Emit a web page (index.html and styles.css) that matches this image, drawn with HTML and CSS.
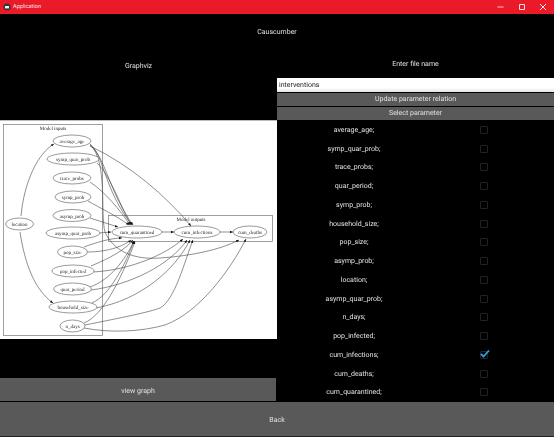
FILE: index.html
```html
<!DOCTYPE html>
<html lang="en">
<head>
    <meta charset="UTF-8">
    <meta name="viewport" content="width=device-width, initial-scale=1.0">
    <title>Application</title>
    <link rel="stylesheet" href="styles.css">
</head>
<body>
<div class="app">
    <div class="titlebar">
        <svg class="app-icon" width="8" height="8" viewBox="0 0 8 8"><circle cx="4" cy="4" r="3.6" fill="#3a3338"/><path d="M2 3h4v2.4H2z" fill="#f2f2f2"/></svg>
        <span class="app-name">Application</span>
        <div class="window-controls">
            <svg width="8" height="8" viewBox="0 0 8 8"><path d="M0.5 4h6" stroke="#f6c9cc" fill="none"/></svg>
            <svg width="8" height="8" viewBox="0 0 8 8"><path d="M1.5 1.5h5v5h-5z" stroke="#f9dfe0" fill="none"/></svg>
            <svg width="8" height="8" viewBox="0 0 8 8"><path d="M1 1l6 6M7 1l-6 6" stroke="#fbe6e7" fill="none"/></svg>
        </div>
    </div>

    <div class="page-title">Causcumber</div>

    <div class="columns">
        <div class="left-col">
            <div class="graph-label">Graphviz</div>
            <div class="graph-image">
                <svg width="277" height="219" viewBox="0 120 277 219">
                    <defs>
                        <marker id="head" markerWidth="4" markerHeight="4" refX="3" refY="1.5" orient="auto" markerUnits="userSpaceOnUse">
                            <path d="M0 0.3L3 1.5L0 2.7z" fill="#111"/>
                        </marker>
                    </defs>
                    <rect class="cluster" x="3.5" y="124.5" width="99" height="211"/>
                    <rect class="cluster" x="108.5" y="215.5" width="164" height="26"/>
                    <text class="node-text" x="53" y="130">Model inputs</text>
                    <text class="node-text" x="191" y="221">Model outputs</text>

                    <g class="edges">
                        <path d="M21 216C24 182 38 153 54 144"/>
                        <path d="M20 232C25 265 35 290 53 303"/>
                        <path d="M90 146C130 165 165 195 191 226"/>
                        <path d="M90 144C104 155 104 190 132 225"/>
                        <path d="M90 145C106 158 108 190 133 225"/>
                        <path d="M90 145C108 160 100 215 105 232C114 252 135 260 160 258C190 256 220 250 239 240"/>
                        <path d="M97 163C110 175 120 205 131 225"/>
                        <path d="M90 182C105 192 120 210 130 225"/>
                        <path d="M88 201C100 208 115 215 129 225"/>
                        <path d="M90 218L118 227"/>
                        <path d="M99 233L111 232"/>
                        <path d="M84 247C95 243 110 238 122 238"/>
                        <path d="M87 252C110 252 125 245 131 240"/>
                        <path d="M91 266C110 258 125 250 133 240"/>
                        <path d="M93 272C130 270 165 255 183 239"/>
                        <path d="M90 287C110 280 125 260 134 241"/>
                        <path d="M91 290C130 285 170 265 187 240"/>
                        <path d="M92 303C110 295 125 265 134 241"/>
                        <path d="M96 308C140 300 175 270 190 240"/>
                        <path d="M84 323C105 315 125 270 135 241"/>
                        <path d="M85 325C120 318 150 312 160 308C175 300 185 260 193 240"/>
                        <path d="M84 328C110 333 140 332 165 325C200 312 230 270 246 239"/>
                        <path d="M162 232L174 232"/>
                        <path d="M220 232L233 232"/>
                    </g>

                    <ellipse class="node" cx="72" cy="141" rx="19" ry="6"/>
                    <text class="node-text" x="72" y="143">average_age</text>
                    <ellipse class="node" cx="73" cy="159" rx="26" ry="6"/>
                    <text class="node-text" x="73" y="161">symp_quar_prob</text>
                    <ellipse class="node" cx="72" cy="178" rx="19" ry="6"/>
                    <text class="node-text" x="72" y="180">trace_probs</text>
                    <ellipse class="node" cx="73" cy="197" rx="18" ry="6"/>
                    <text class="node-text" x="73" y="199">symp_prob</text>
                    <ellipse class="node" cx="72" cy="215.500" rx="19" ry="6"/>
                    <text class="node-text" x="72" y="217.500">asymp_prob</text>
                    <ellipse class="node" cx="19.500" cy="224" rx="14" ry="6"/>
                    <text class="node-text" x="19.500" y="226">location</text>
                    <ellipse class="node" cx="73" cy="233" rx="27" ry="6"/>
                    <text class="node-text" x="73" y="235">asymp_quar_prob</text>
                    <ellipse class="node" cx="72.500" cy="252" rx="15" ry="6"/>
                    <text class="node-text" x="72.500" y="254">pop_size</text>
                    <ellipse class="node" cx="73" cy="271" rx="21" ry="6"/>
                    <text class="node-text" x="73" y="273">pop_infected</text>
                    <ellipse class="node" cx="72.500" cy="289" rx="19" ry="6"/>
                    <text class="node-text" x="72.500" y="291">quar_period</text>
                    <ellipse class="node" cx="73" cy="307" rx="24" ry="6"/>
                    <text class="node-text" x="73" y="309">household_size</text>
                    <ellipse class="node" cx="72.500" cy="326" rx="12.500" ry="6"/>
                    <text class="node-text" x="72.500" y="328">n_days</text>
                    <ellipse class="node" cx="137" cy="232" rx="25" ry="6"/>
                    <text class="node-text" x="137" y="234">cum_quarantined</text>
                    <ellipse class="node" cx="197" cy="232" rx="23" ry="6"/>
                    <text class="node-text" x="197" y="234">cum_infections</text>
                    <ellipse class="node" cx="250" cy="232" rx="17" ry="6"/>
                    <text class="node-text" x="250" y="234">cum_deaths</text>
                </svg>
            </div>
            <button class="btn view-btn">view graph</button>
        </div>

        <div class="right-col">
            <div class="file-label">Enter file name</div>
            <input class="file-input" type="text" value="interventions">
            <button class="btn action-btn">Update parameter relation</button>
            <button class="btn action-btn">Select parameter</button>
            <ul class="param-list">
                <li class="param-row"><span>average_age;</span><i class="check"></i></li>
                <li class="param-row"><span>symp_quar_prob;</span><i class="check"></i></li>
                <li class="param-row"><span>trace_probs;</span><i class="check"></i></li>
                <li class="param-row"><span>quar_period;</span><i class="check"></i></li>
                <li class="param-row"><span>symp_prob;</span><i class="check"></i></li>
                <li class="param-row"><span>household_size;</span><i class="check"></i></li>
                <li class="param-row"><span>pop_size;</span><i class="check"></i></li>
                <li class="param-row"><span>asymp_prob;</span><i class="check"></i></li>
                <li class="param-row"><span>location;</span><i class="check"></i></li>
                <li class="param-row"><span>asymp_quar_prob;</span><i class="check"></i></li>
                <li class="param-row"><span>n_days;</span><i class="check"></i></li>
                <li class="param-row"><span>pop_infected;</span><i class="check"></i></li>
                <li class="param-row"><span>cum_infections;</span>
                    <i class="check checked"><svg width="10" height="9" viewBox="0 0 10 9"><path d="M1 5l2.500 2.500L9 1.500" stroke="#2aa5e8" stroke-width="1.800" fill="none"/></svg></i>
                </li>
                <li class="param-row"><span>cum_deaths;</span><i class="check"></i></li>
                <li class="param-row"><span>cum_quarantined;</span><i class="check"></i></li>
            </ul>
        </div>
    </div>

    <button class="btn back-btn">Back</button>
</div>
</body>
</html>
```

FILE: styles.css
```css
body {
    margin: 0;
    background-color: #000;
    color: #e0e0e0;
    font-family: Roboto, "Liberation Sans", sans-serif;
    font-size: 7px;
    text-rendering: geometricPrecision;
    overflow: hidden;
}

/* the reference capture is slightly soft */
.app {
    width: 554px;
    height: 437px;
    display: flex;
    flex-direction: column;
    filter: blur(0.3px);
}

.titlebar {
    height: 14px;
    background-color: #ea1a28;
    display: flex;
    align-items: center;
    padding-left: 3px;
    color: #fbe3e4;
    font-size: 5.6px;
}

.app-icon {
    margin-right: 2px;
}

.window-controls {
    margin-left: auto;
    display: flex;
    gap: 13px;
    padding-right: 7px;
}

.page-title {
    height: 36px;
    line-height: 37px;
    text-align: center;
}

.columns {
    height: 352px;
    display: grid;
    grid-template-columns: 277px 277px;
}

.left-col {
    display: flex;
    flex-direction: column;
}

.graph-label {
    height: 32px;
    line-height: 33px;
    text-align: center;
    margin-bottom: 38px;
}

.graph-image {
    height: 219px;
    background-color: #fff;
    border-top: 1px solid #bbb;
    box-sizing: border-box;
    overflow: hidden;
}

.graph-image svg {
    display: block;
    margin-top: -1px;
}

.cluster {
    fill: none;
    stroke: #777;
    stroke-width: 0.7;
}

.node {
    fill: #fff;
    stroke: #555;
    stroke-width: 0.6;
}

.node-text {
    font-family: "Liberation Serif", serif;
    font-size: 5px;
    text-anchor: middle;
    fill: #222;
}

.edges path {
    fill: none;
    stroke: #444;
    stroke-width: 0.6;
    marker-end: url(#head);
}

.btn {
    display: block;
    border: none;
    padding: 0;
    background-color: #595959;
    color: #e0e0e0;
    font-family: inherit;
    font-size: 7px;
    text-rendering: inherit;
}

.view-btn {
    margin-top: auto;
    height: 23px;
    width: 276px;
    margin-bottom: 1px;
    padding-top: 2px;
}

.right-col {
    display: flex;
    flex-direction: column;
}

.file-label {
    height: 28px;
    line-height: 29px;
    text-align: center;
}

.file-input {
    height: 13.5px;
    box-sizing: border-box;
    width: 100%;
    border: none;
    outline: none;
    padding: 0 2px;
    margin: 0;
    background: linear-gradient(#fff 70%, #e4e4e4);
    color: #222;
    font-family: inherit;
    font-size: 7px;
    text-rendering: inherit;
}

.action-btn {
    height: 13px;
    width: 100%;
    margin-top: 1px;
}

.param-list {
    list-style-type: none;
    margin: 0;
    padding: 1px 0 0;
}

.param-row {
    height: 18.75px;
    display: grid;
    grid-template-columns: 154px 106px;
    align-items: center;
    justify-items: center;
}

.check {
    position: relative;
    width: 8px;
    height: 8px;
    box-sizing: border-box;
    border: 1px solid #222;
    border-radius: 1px;
}

.checked svg {
    position: absolute;
    left: -1px;
    top: -3px;
}

.back-btn {
    height: 32px;
    width: 100%;
    padding-top: 2px;
    border-bottom: 1px solid #222;
    box-sizing: content-box;
}
```
